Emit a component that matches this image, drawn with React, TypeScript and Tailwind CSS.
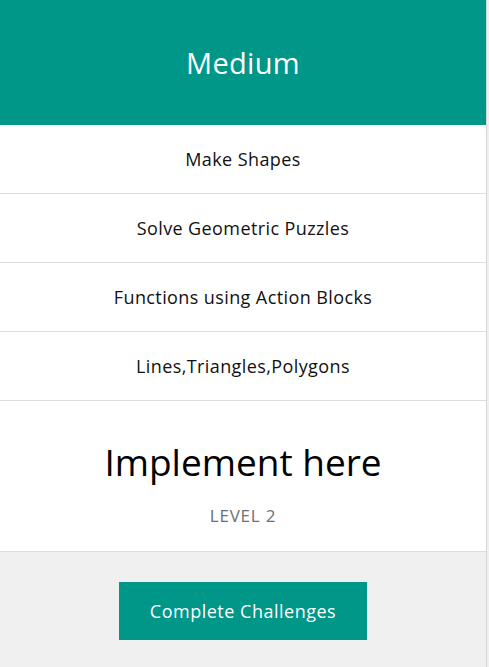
export default function App() {
  const rows = [
    "Make Shapes",
    "Solve Geometric Puzzles",
    "Functions using Action Blocks",
    "Lines,Triangles,Polygons",
  ];
  return (
    <div
      className="min-h-screen w-full bg-[#f0f0f0]"
      style={{ fontFamily: "'Open Sans', sans-serif" }}
    >
      <div className="w-[487px] min-h-screen border-r border-[#d6d6d6] flex flex-col">
        <div className="h-[125px] bg-[#009688] flex items-center justify-center">
          <span className="text-[29px] tracking-[0.3px] text-white">Medium</span>
        </div>
        {rows.map((r) => (
          <div
            key={r}
            className="h-[69px] bg-white border-b border-[#dddddd] flex items-center justify-center"
          >
            <span className="text-[18px] tracking-[0.4px] text-[#111]">{r}</span>
          </div>
        ))}
        <div className="h-[151px] bg-white border-b border-[#dddddd] flex flex-col items-center">
          <span className="mt-[42px] text-[37px] leading-none text-black">Implement here</span>
          <span className="mt-[27px] text-[17px] leading-none tracking-[0.8px] text-[#6b6f7a]">LEVEL 2</span>
        </div>
        <div className="flex-1 flex justify-center pt-[30px]">
          <button className="w-[248px] h-[58px] bg-[#009688] text-white text-[18px] tracking-[0.5px]">
            Complete Challenges
          </button>
        </div>
      </div>
    </div>
  );
}
